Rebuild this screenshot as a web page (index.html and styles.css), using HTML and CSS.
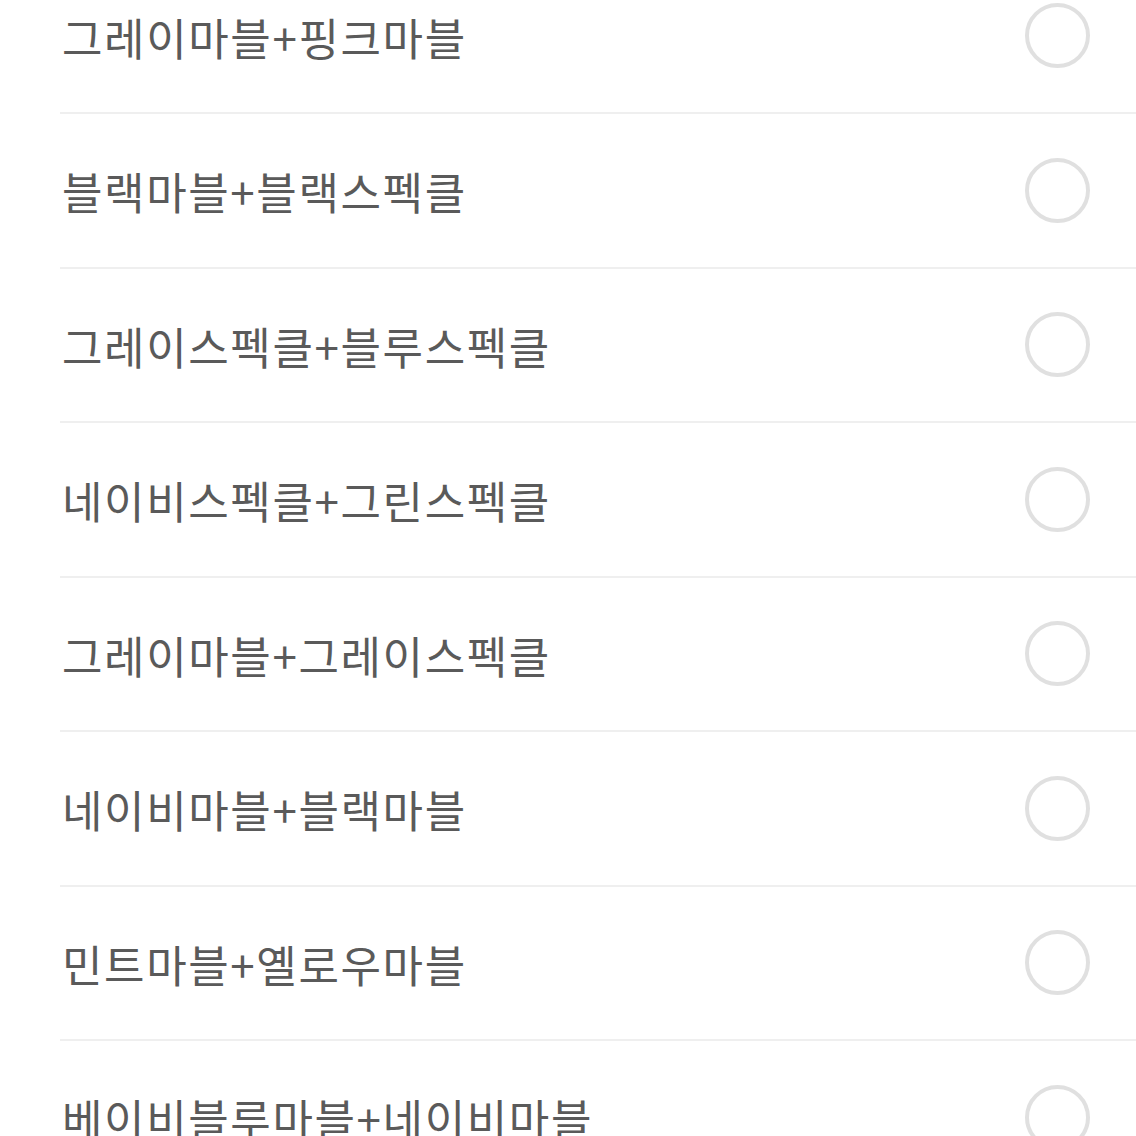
FILE: index.html
```html
<!DOCTYPE html>
<html lang="ko">
<head>
<meta charset="utf-8">
<link rel="stylesheet" href="styles.css">
</head>
<body>
<ul class="options">
  <li class="option"><span class="label">그레이마블+핑크마블</span><span class="radio"></span></li>
  <li class="option"><span class="label">블랙마블+블랙스펙클</span><span class="radio"></span></li>
  <li class="option"><span class="label">그레이스펙클+블루스펙클</span><span class="radio"></span></li>
  <li class="option"><span class="label">네이비스펙클+그린스펙클</span><span class="radio"></span></li>
  <li class="option"><span class="label">그레이마블+그레이스펙클</span><span class="radio"></span></li>
  <li class="option"><span class="label">네이비마블+블랙마블</span><span class="radio"></span></li>
  <li class="option"><span class="label">민트마블+옐로우마블</span><span class="radio"></span></li>
  <li class="option"><span class="label">베이비블루마블+네이비마블</span><span class="radio"></span></li>
</ul>
</body>
</html>
```
FILE: styles.css
```css
html, body {
  margin: 0;
  padding: 0;
  background: #ffffff;
  overflow: hidden;
  height: 1136px;
}
.options {
  list-style: none;
  margin: -40.5px 0 0 60px;
  padding: 0;
}
.option {
  box-sizing: border-box;
  height: 154.5px;
  display: flex;
  align-items: center;
  justify-content: space-between;
  padding: 0 46px 0 2px;
  border-bottom: 2px solid #efefef;
}
.label {
  font-family: "Noto Sans CJK KR", "Noto Sans", sans-serif;
  font-size: 44px;
  letter-spacing: 1.6px;
  color: #5a5a5a;
  line-height: 1;
  padding-top: 2px;
}
.radio {
  box-sizing: border-box;
  width: 65px;
  height: 65px;
  border-radius: 50%;
  border: 4.5px solid #e0e0e0;
}
```
